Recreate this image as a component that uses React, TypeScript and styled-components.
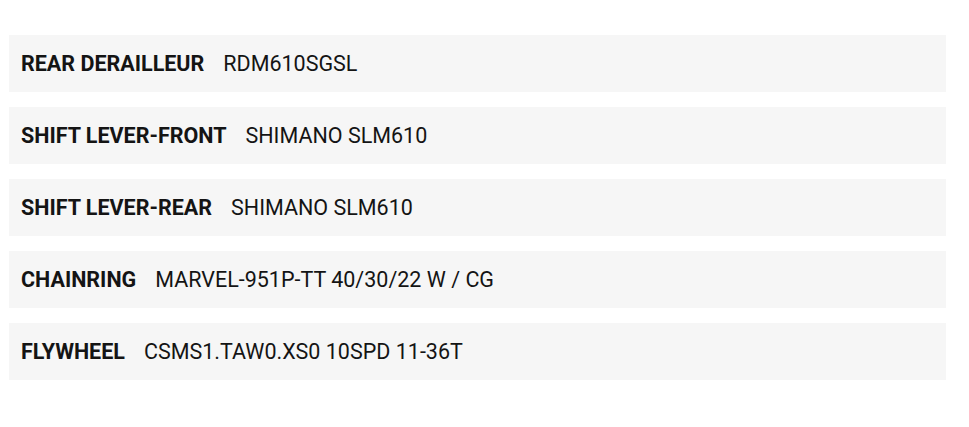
import * as React from "react"
import styled, { createGlobalStyle } from "styled-components"

const GlobalStyle = createGlobalStyle`
  body {
    margin: 0;
    background: #ffffff;
    font-family: Roboto, "Liberation Sans", sans-serif;
  }
`

const SpecList = styled.dl`
  display: flex;
  flex-direction: column;
  gap: 15px;
  margin: 0;
  padding: 35px 23px 0 9px;
`

const SpecRow = styled.div`
  display: flex;
  align-items: center;
  height: 57px;
  padding: 0 12px;
  background: #f6f6f6;
  color: #141414;
  font-size: 21.5px;
  line-height: 1;
`

const SpecName = styled.dt`
  font-weight: 700;
  margin-right: 19px;
  text-transform: uppercase;
`

const SpecValue = styled.dd`
  margin: 0;
  font-weight: 400;
`

const specs = [
  { name: "Rear derailleur", value: "RDM610SGSL" },
  { name: "Shift lever-front", value: "SHIMANO SLM610" },
  { name: "Shift lever-rear", value: "SHIMANO SLM610" },
  { name: "Chainring", value: "MARVEL-951P-TT 40/30/22 W / CG" },
  { name: "Flywheel", value: "CSMS1.TAW0.XS0 10SPD 11-36T" },
]

const App = () => (
  <>
    <GlobalStyle />
    <SpecList>
      {specs.map(spec => (
        <SpecRow key={spec.name}>
          <SpecName>{spec.name}</SpecName>
          <SpecValue>{spec.value}</SpecValue>
        </SpecRow>
      ))}
    </SpecList>
  </>
)

export default App
